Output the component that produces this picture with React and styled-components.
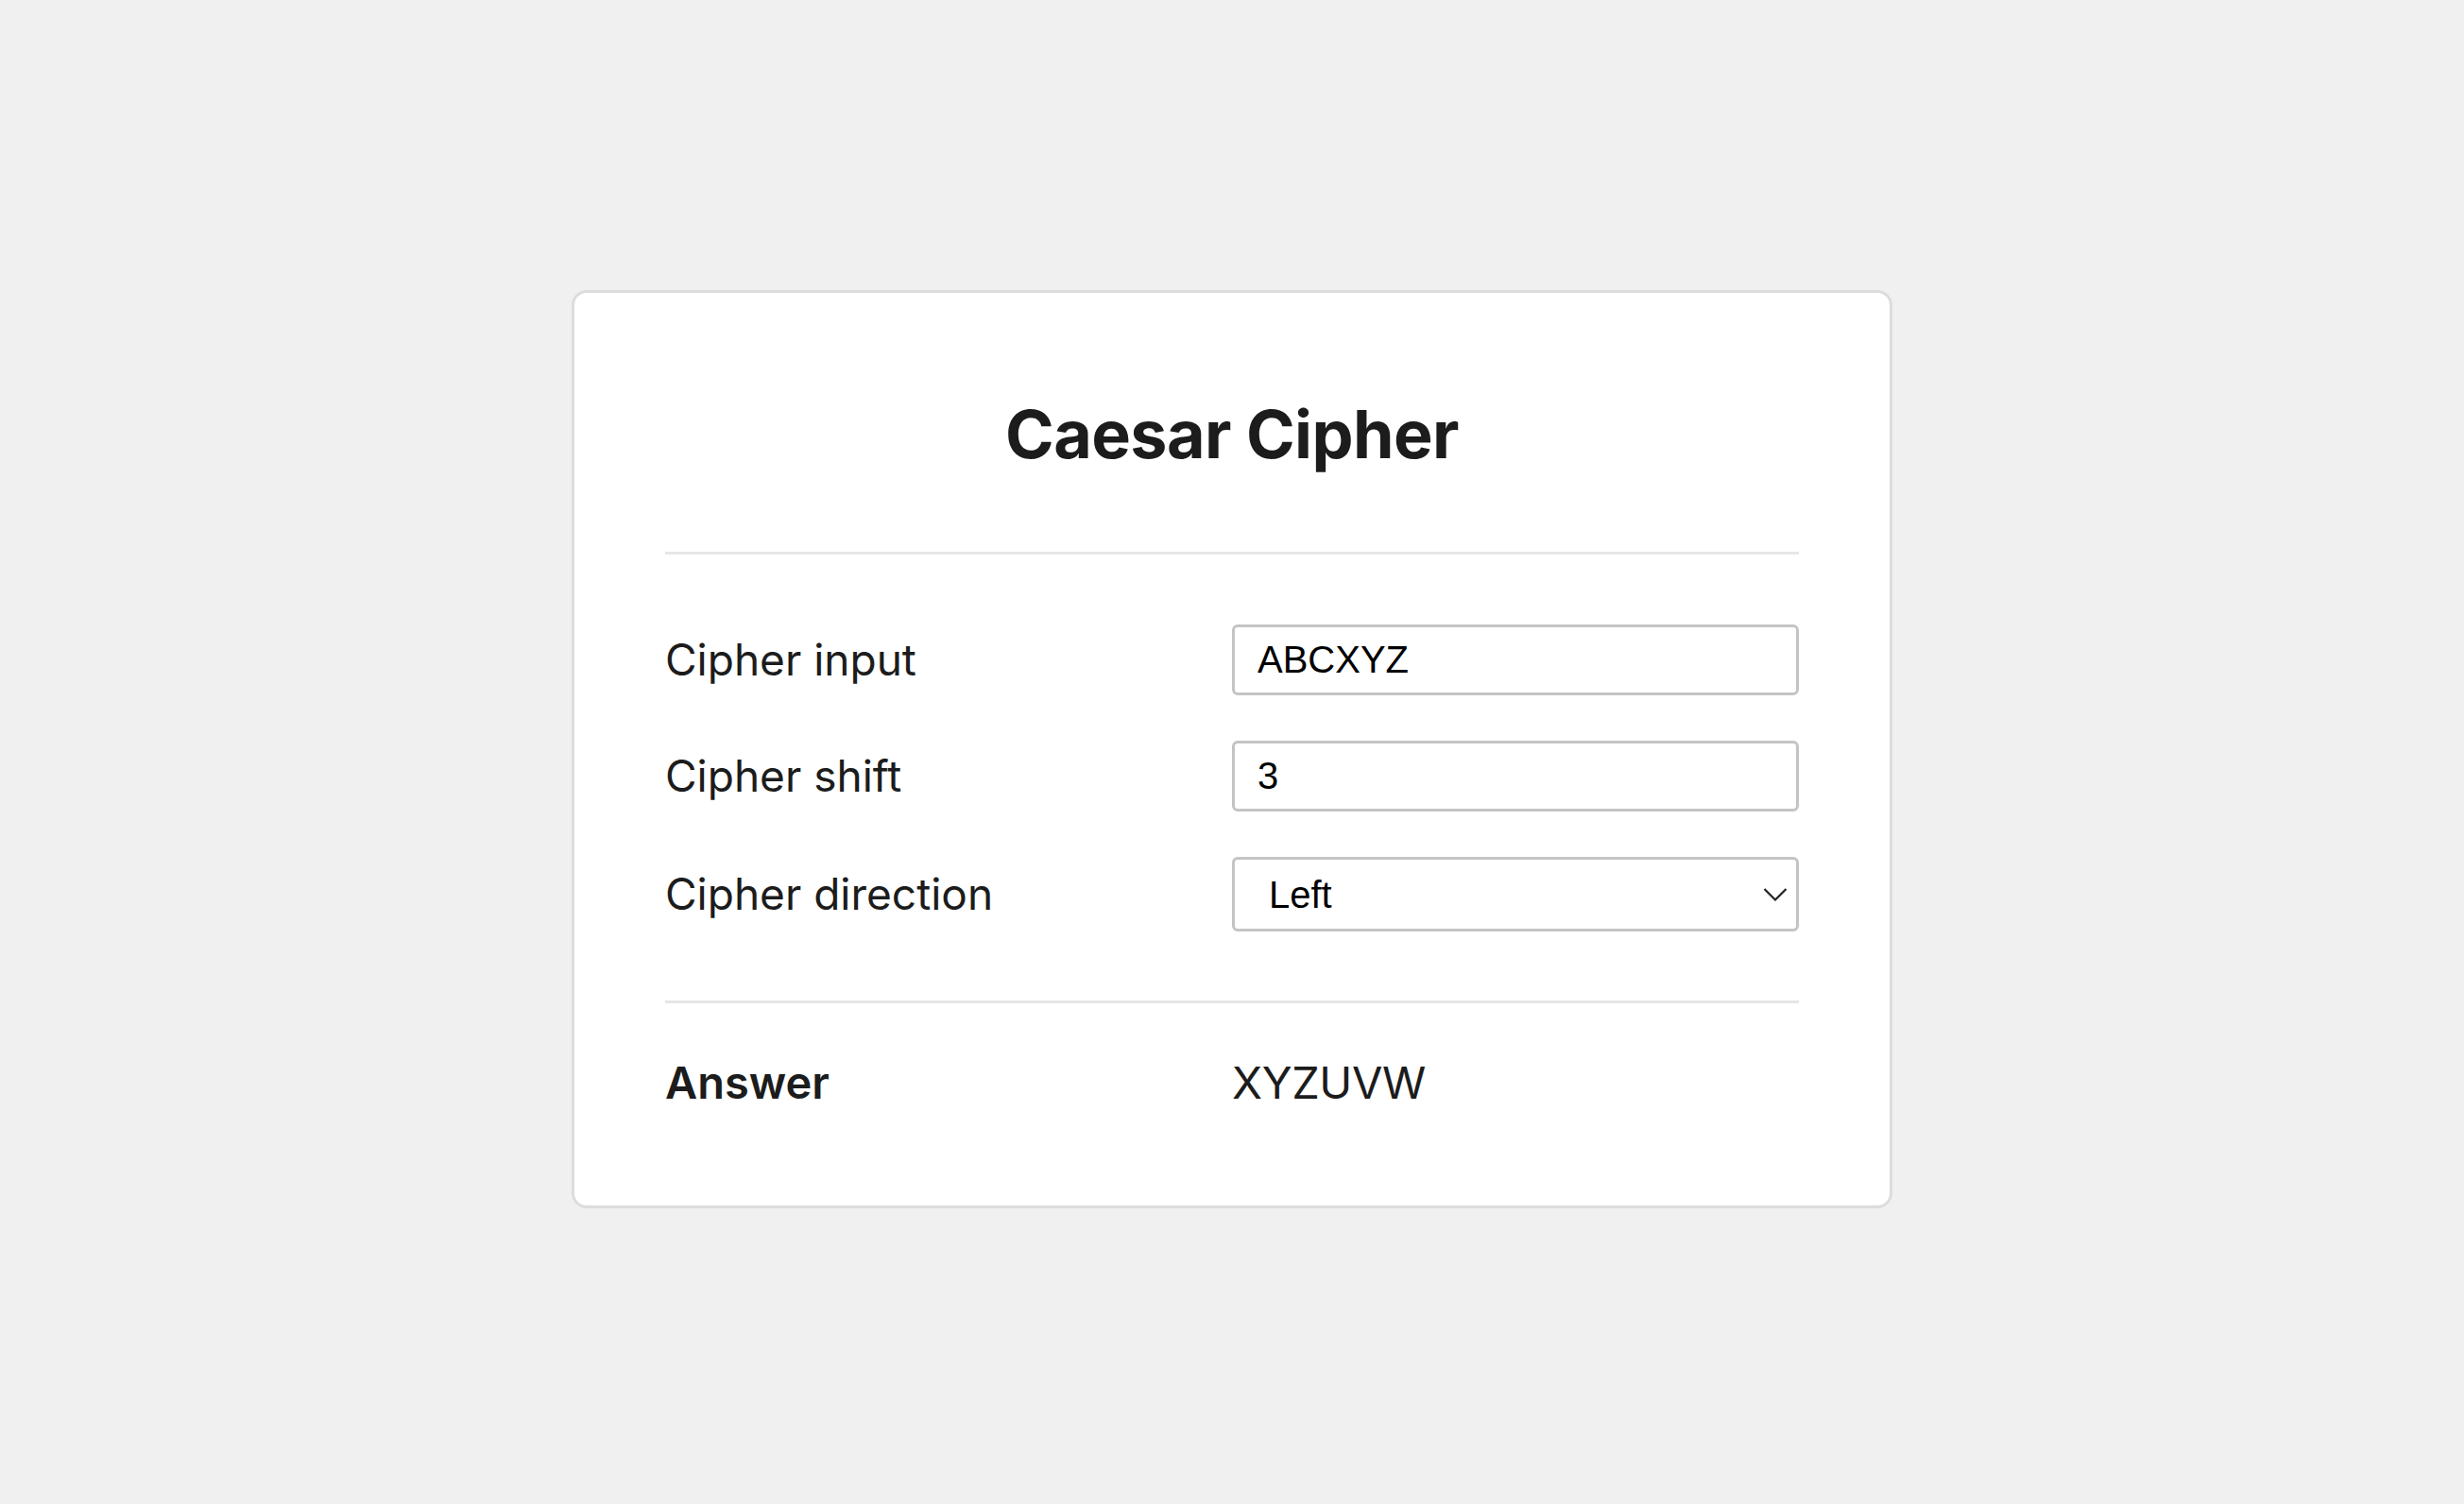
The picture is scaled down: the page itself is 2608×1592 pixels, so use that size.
import React, { useState } from 'react';
import styled, { createGlobalStyle } from 'styled-components';

const GlobalStyle = createGlobalStyle`
  html, body {
    margin: 0;
    padding: 0;
    background: #f0f0f0;
  }
  body {
    font-family: Inter, "Noto Sans", sans-serif;
    color: #1c1c1c;
  }
`;

const Page = styled.div`
  min-height: 1592px;
  display: flex;
  justify-content: center;
  align-items: flex-start;
  padding-top: 307px;
  box-sizing: border-box;
`;

const Card = styled.div`
  width: 1398px;
  box-sizing: border-box;
  background: #ffffff;
  border: 3px solid #dcdcdc;
  border-radius: 16px;
  padding: 108px 96px 102px;
`;

const Title = styled.h1`
  margin: 0;
  font-size: 70px;
  line-height: 1.2;
  font-weight: 700;
  text-align: center;
  letter-spacing: -0.6px;
`;

const Divider = styled.hr`
  border: none;
  height: 3px;
  background: #e6e6e6;
  margin: ${(props) => props.margin};
`;

const Form = styled.div`
  display: flex;
  flex-direction: column;
  gap: 48px;
`;

const Row = styled.div`
  display: grid;
  grid-template-columns: 1fr 1fr;
  align-items: center;
`;

const Label = styled.label`
  font-size: ${(props) => (props.bold ? '47px' : '46px')};
  font-weight: ${(props) => (props.bold ? 600 : 400)};
  line-height: 1.2;
`;

const Input = styled.input`
  box-sizing: border-box;
  width: 100%;
  height: 75px;
  border: 3px solid #c4c4c4;
  border-radius: 6px;
  padding: 0 24px;
  font-family: "Liberation Sans", Arial, sans-serif;
  font-size: 40px;
  color: #000;
  outline: none;
`;

const SelectWrap = styled.div`
  position: relative;
`;

const Select = styled.select`
  box-sizing: border-box;
  width: 100%;
  height: 79px;
  border: 3px solid #c4c4c4;
  border-radius: 6px;
  padding: 0 60px 0 36px;
  font-family: "Liberation Sans", Arial, sans-serif;
  font-size: 40px;
  color: #000;
  background: #fff;
  appearance: none;
  outline: none;
`;

const Chevron = styled.svg`
  position: absolute;
  right: 12px;
  top: 50%;
  transform: translateY(-50%);
  pointer-events: none;
`;

const Result = styled.div`
  font-size: 47px;
  line-height: 1.2;
  letter-spacing: -0.4px;
`;

const shiftText = (text, shift, dir) => {
  const s = ((dir === 'left' ? -shift : shift) % 26 + 26) % 26;
  return text
    .split('')
    .map((ch) => {
      const c = ch.charCodeAt(0);
      if (c >= 65 && c <= 90) return String.fromCharCode(((c - 65 + s) % 26) + 65);
      if (c >= 97 && c <= 122) return String.fromCharCode(((c - 97 + s) % 26) + 97);
      return ch;
    })
    .join('');
};

const App = () => {
  const [text, setText] = useState('ABCXYZ');
  const [shift, setShift] = useState('3');
  const [dir, setDir] = useState('left');

  return (
    <Page>
      <GlobalStyle />
      <Card>
        <Title>Caesar Cipher</Title>
        <Divider margin="82px 0 74px" />
        <Form>
          <Row>
            <Label>Cipher input</Label>
            <Input value={text} onChange={(e) => setText(e.target.value)} />
          </Row>
          <Row>
            <Label>Cipher shift</Label>
            <Input value={shift} onChange={(e) => setShift(e.target.value)} />
          </Row>
          <Row>
            <Label>Cipher direction</Label>
            <SelectWrap>
              <Select value={dir} onChange={(e) => setDir(e.target.value)}>
                <option value="left">Left</option>
                <option value="right">Right</option>
              </Select>
              <Chevron width="26" height="16" viewBox="0 0 26 16">
                <path d="M1.5 2 L13 13.5 L24.5 2" fill="none" stroke="#222" strokeWidth="2.2" />
              </Chevron>
            </SelectWrap>
          </Row>
        </Form>
        <Divider margin="73px 0 56px" />
        <Row>
          <Label bold>Answer</Label>
          <Result>{shiftText(text, parseInt(shift, 10) || 0, dir)}</Result>
        </Row>
      </Card>
    </Page>
  );
};

export default App;
